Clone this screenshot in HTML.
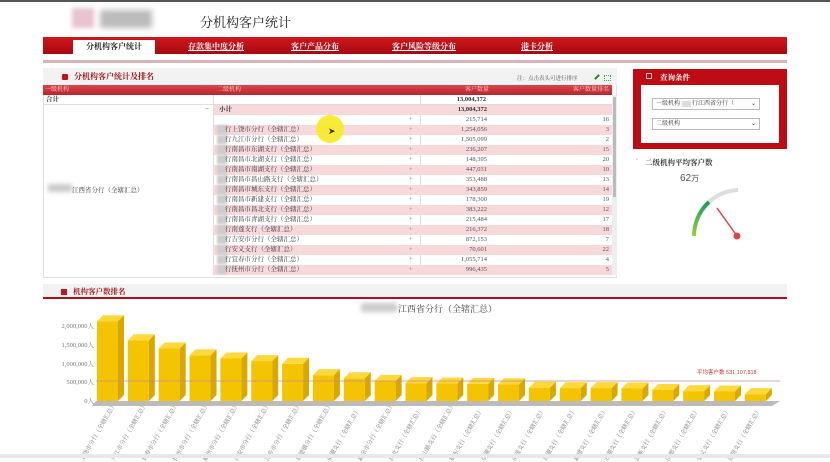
<!DOCTYPE html>
<html><head><meta charset="utf-8"><style>
*{margin:0;padding:0;box-sizing:border-box}
body{width:830px;height:458px;background:#fff;position:relative;overflow:hidden;font-family:"Liberation Serif","Noto Serif CJK SC","Noto Sans CJK SC",serif;color:#333}
.a{position:absolute}
.nav a{position:absolute;top:4px;color:#fff;font-size:8px;text-decoration:underline;font-weight:bold}
.row{position:absolute;left:213px;width:399px;height:10px;font-size:6.5px;line-height:10px}
.row.p{background:#f7d9dc}
.row span{position:absolute}
.yl{position:absolute;left:40px;width:54px;text-align:right;font-size:6.5px;color:#777}
.xl{position:absolute;font-size:6px;color:#777;transform-origin:right top;transform:rotate(-60deg);white-space:nowrap;text-align:right;width:60px}
</style></head><body>
<div class="a" style="left:0;top:0;width:830px;height:2px;background:#555"></div>
<div class="a" style="left:72px;top:8px;width:22px;height:20px;background:#e9c3cf;filter:blur(2px)"></div>
<div class="a" style="left:100px;top:10px;width:52px;height:18px;background:#bbb;filter:blur(3px)"></div>
<div class="a" style="left:200px;top:12px;font-size:13px;color:#222">分机构客户统计</div>
<div class="a nav" style="left:43px;top:37px;width:744px;height:17px;background:linear-gradient(#d0161e,#a70a10)">
<div class="a" style="left:30px;top:3px;width:82px;height:14px;background:#fff"></div>
<a style="left:43px;color:#222;text-decoration:none">分机构客户统计</a>
<a style="left:145px">存款集中度分析</a>
<a style="left:248px">客户产品分布</a>
<a style="left:349px">客户风险等级分布</a>
<a style="left:478px">港卡分析</a>
</div>
<div class="a" style="left:43px;top:60px;width:744px;height:3px;background:#d8b4b8"></div>
<div class="a" style="left:43px;top:68px;width:574px;height:210px;border:1px solid #e0e0e0"></div>
<div class="a" style="left:43px;top:68px;width:574px;height:17px;background:#f2f2f2"></div>
<div class="a" style="left:62px;top:74px;width:6px;height:6px;background:#c81018;border-radius:1px"></div>
<div class="a" style="left:74px;top:71px;font-size:8px;font-weight:bold;color:#a01018">分机构客户统计及排名</div>
<div class="a" style="left:517px;top:74px;font-size:5.5px;color:#555">注：点击表头可进行排序</div>
<div class="a" style="left:594px;top:76px;width:6px;height:2px;background:#2a8a2a;transform:rotate(-45deg)"></div>
<div class="a" style="left:604px;top:75px;width:7px;height:6px;border:1px dotted #4a4"></div>
<div class="a" style="left:43px;top:85px;width:569px;height:10px;background:linear-gradient(#d8454b,#b8262c);font-size:6px;color:#f4cfd0;line-height:10px">
<span class="a" style="left:2px">一级机构</span><span class="a" style="left:174px">二级机构</span><span class="a" style="left:422px">客户数量</span><span class="a" style="left:530px">客户数量排名</span></div>
<div class="a" style="left:43px;top:95px;width:569px;height:10px;border-bottom:1px solid #ddd;font-size:6.5px;line-height:10px;font-weight:bold"><span class="a" style="left:3px">合计</span><span class="a" style="left:380px;width:63px;text-align:right">13,004,372</span></div>
<div class="a" style="left:213px;top:95px;width:1px;height:180px;background:#ddd"></div>
<div class="a" style="left:420px;top:95px;width:1px;height:180px;background:#ddd"></div>
<div class="a" style="left:205px;top:104px;font-size:8px;color:#666">−</div>
<div class="a" style="left:48px;top:184px;width:24px;height:8px;background:#ccc;filter:blur(2px)"></div>
<div class="a" style="left:72px;top:185px;font-size:6.5px">江西省分行（全辖汇总）</div>
<div class="row p" style="top:105px;font-weight:bold"><span style="left:6px">小计</span><span style="left:214px;width:60px;text-align:right">13,004,372</span></div>
<div class="a" style="left:612px;top:95px;width:5px;height:180px;background:#eee"><div style="margin:2px 1px;width:3px;height:100px;background:#bbb"></div></div>
<div id="rows"></div>
<div class="a" style="left:316px;top:115px;width:28px;height:28px;border-radius:50%;background:#f7ea24;opacity:.9"></div>
<div class="a" style="left:328px;top:126px;font-size:9px;color:#333">➤</div>
<div class="a" style="left:633px;top:69px;width:154px;height:80px;background:#bd0c14"></div>
<div class="a" style="left:646px;top:73px;width:6px;height:6px;border:1px solid #f0c0c0"></div>
<div class="a" style="left:660px;top:72px;font-size:7.5px;color:#fff;font-weight:bold">查询条件</div>
<div class="a" style="left:641px;top:85px;width:138px;height:58px;background:#fff"></div>
<div class="a" style="left:652px;top:98px;width:108px;height:12px;border:1px solid #bbb;font-size:6px;line-height:10px;padding-left:3px">一级机构 <span style="color:#ccc;background:#ddd">&nbsp;&nbsp;&nbsp;&nbsp;&nbsp;&nbsp;</span> 行江西省分行（ <span style="float:right;margin-right:3px">⌄</span></div>
<div class="a" style="left:652px;top:118px;width:108px;height:12px;border:1px solid #bbb;font-size:6px;line-height:10px;padding-left:3px">二级机构 <span style="float:right;margin-right:3px">⌄</span></div>
<div class="a" style="left:636px;top:158px;font-size:5px;color:#999">•</div>
<div class="a" style="left:645px;top:157px;font-size:7.5px;font-weight:bold;color:#333">二级机构平均客户数</div>
<div class="a" style="left:680px;top:173px;font-family:'Liberation Sans',sans-serif;font-size:10px;color:#555">62<span style="font-size:8px">万</span></div>
<svg class="a" style="left:680px;top:180px" width="80" height="70">
<path d="M14 56 A46 46 0 0 1 29 22" stroke="url(#g)" stroke-width="4" fill="none"/>
<path d="M29 22 A46 46 0 0 1 58 10" stroke="#ddd" stroke-width="4" fill="none"/>
<defs><linearGradient id="g" x1="0" y1="1" x2="0" y2="0"><stop offset="0" stop-color="#9ad23a"/><stop offset="1" stop-color="#1a9a60"/></linearGradient></defs>
<line x1="57" y1="56" x2="37" y2="28" stroke="#d44" stroke-width="1.5"/>
<circle cx="57" cy="56" r="3.5" fill="#d44"/>
</svg>
<div class="a" style="left:43px;top:284px;width:744px;height:15px;background:#f2f2f2;border-bottom:2px solid #b01018"></div>
<div class="a" style="left:61px;top:289px;width:6px;height:6px;background:#c81018"></div>
<div class="a" style="left:73px;top:286px;font-size:7.5px;font-weight:bold;color:#a01018">机构客户数排名</div>
<div class="a" style="left:361px;top:303px;width:36px;height:9px;background:#ccc;filter:blur(2px)"></div>
<div class="a" style="left:398px;top:302px;font-size:9px;color:#444">江西省分行（全辖汇总）</div>
<div class="yl" style="top:321px">2,000,000人</div>
<div class="yl" style="top:340px">1,500,000人</div>
<div class="yl" style="top:359px">1,000,000人</div>
<div class="yl" style="top:377px">500,000人</div>
<div class="yl" style="top:396px">0人</div>
<svg class="a" style="left:0;top:300px" width="830" height="110" id="ch"></svg>
<div class="a" style="left:697px;top:368px;font-size:5.5px;color:#c33;font-family:'Liberation Sans',sans-serif">平均客户数 531,107,818</div>
<div id="xl"></div>
<div class="a" style="left:0;top:454px;width:830px;height:4px;background:#e8e8e8"></div>
<script>
var rows=[["",215714,16],["行上饶市分行（全辖汇总）",1254056,3],["行九江市分行（全辖汇总）",1505099,2],["行南昌市东湖支行（全辖汇总）",236207,15],["行南昌市北湖支行（全辖汇总）",148395,20],["行南昌市南湖支行（全辖汇总）",447031,10],["行南昌市昌山路支行（全辖汇总）",353488,13],["行南昌市城东支行（全辖汇总）",343859,14],["行南昌市新建支行（全辖汇总）",178300,19],["行南昌市昌北支行（全辖汇总）",383222,12],["行南昌市青湖支行（全辖汇总）",215484,17],["行南莲支行（全辖汇总）",216372,18],["行吉安市分行（全辖汇总）",872153,7],["行安义支行（全辖汇总）",70601,22],["行宜春市分行（全辖汇总）",1055714,4],["行抚州市分行（全辖汇总）",996435,5]];
var h="";rows.forEach(function(r,i){var t=115+i*10;h+='<div class="row'+(i%2?' p':'')+'" style="top:'+t+'px">'+(r[0]?'<span style="left:4px;width:10px;height:9px;background:#ccc;filter:blur(1px)"></span>':'')+'<span style="left:12px">'+r[0]+'</span><span style="left:196px;color:#777">+</span><span style="left:214px;width:60px;text-align:right;color:#555">'+r[1].toLocaleString('en-US')+'</span><span style="right:3px;color:#555">'+r[2]+'</span></div>'});
document.getElementById('rows').innerHTML=h;
var v=[2.1,1.6,1.38,1.2,1.12,1.05,0.98,0.68,0.6,0.53,0.47,0.46,0.45,0.44,0.35,0.34,0.34,0.33,0.29,0.26,0.25,0.18];
var s='<polygon points="96,101 780,101 772,106 92,106" fill="#bbb"/>';
var xs='';var names=["上饶市分行","九江市分行","宜春市分行","抚州市分行","赣州市分行","吉安市分行","萍乡市分行","景德镇分行","南湖支行","新余市分行","昌北支行","昌山路支行","城东支行","东湖支行","南莲支行","青湖支行","新建支行","北湖支行","高新支行","洪都支行","安义支行","进贤支行"];
v.forEach(function(x,i){var X=97+i*30.85,H=x*38,T=101-H;
s+='<rect x="'+X+'" y="'+T+'" width="21" height="'+H+'" fill="#f5c400"/>';
s+='<polygon points="'+(X+21)+','+T+' '+(X+27)+','+(T-6)+' '+(X+27)+','+(101-6)+' '+(X+21)+',101" fill="#d9a800"/>';
s+='<polygon points="'+X+','+T+' '+(X+6)+','+(T-6)+' '+(X+27)+','+(T-6)+' '+(X+21)+','+T+'" fill="#ffd83a"/>';
xs+='<div class="xl" style="left:'+(X-50)+'px;top:406px">'+names[i]+'（全辖汇总）</div>';});
s+='<line x1="96" y1="81" x2="780" y2="81" stroke="#c88" stroke-width="0.8"/>';
document.getElementById('ch').innerHTML=s;document.getElementById('xl').innerHTML=xs;
</script>
</body></html>
